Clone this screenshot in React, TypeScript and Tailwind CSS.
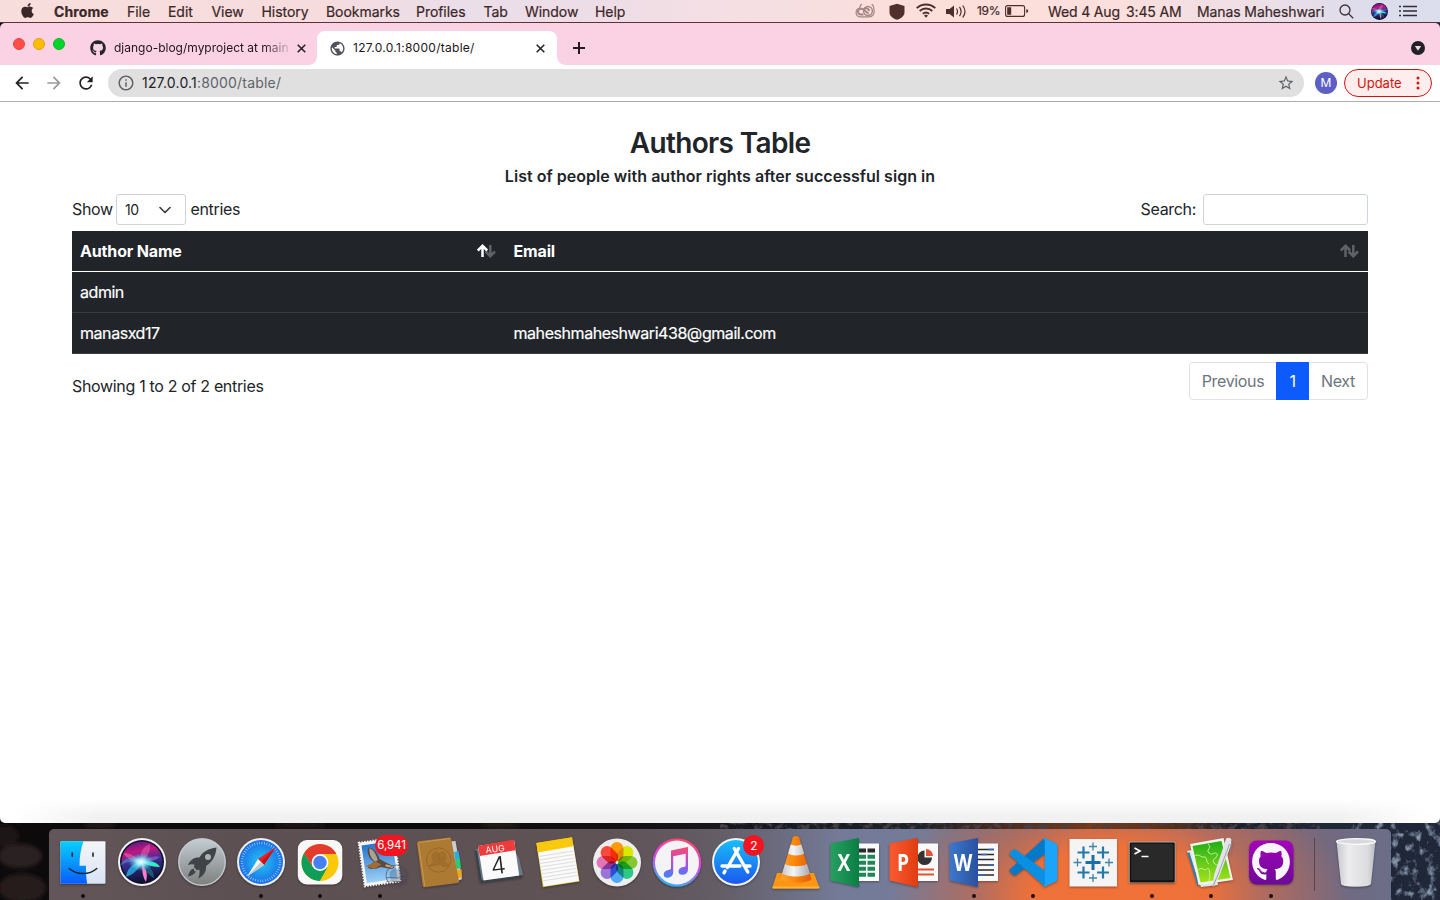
import React from "react";
import { FaApple, FaGithub } from "react-icons/fa";
import { MdArrowBack, MdArrowForward, MdInfoOutline, MdPublic, MdRefresh, MdStarBorder } from "react-icons/md";

const menus: [string, string][] = [
  ["File", "w-[41px]"],
  ["Edit", "w-[43.5px]"],
  ["View", "w-[50px]"],
  ["History", "w-[64.5px]"],
  ["Bookmarks", "w-[90px]"],
  ["Profiles", "w-[67.5px]"],
  ["Tab", "w-[41.5px]"],
  ["Window", "w-[70px]"],
  ["Help", "w-[40px]"],
];

function SiriOrb({ id }: { id: string }) {
  return (
    <>
      <defs>
        <linearGradient id={id + "a"} x1="0.3" y1="0" x2="0.5" y2="1">
          <stop offset="0" stopColor="#5a1c80" />
          <stop offset=".25" stopColor="#c3157f" />
          <stop offset=".5" stopColor="#3a2f92" />
          <stop offset="1" stopColor="#0b0f2e" />
        </linearGradient>
        <radialGradient id={id + "b"}>
          <stop offset="0" stopColor="#fff" />
          <stop offset=".35" stopColor="#a8f4ff" stopOpacity=".9" />
          <stop offset="1" stopColor="#35c6f0" stopOpacity="0" />
        </radialGradient>
        <clipPath id={id + "c"}><circle cx="28" cy="28" r="21.5" /></clipPath>
      </defs>
      <circle cx="28" cy="28" r="22" fill="#12112c" />
      <g clipPath={`url(#${id}c)`}>
        <circle cx="28" cy="28" r="20.5" fill={`url(#${id}a)`} />
        <path d="M28 28C20 22 10 22 6 32c8-6 14-4 22-4z" fill="#3aa7ee" opacity=".5" />
        <path d="M28 28C18 29 13 35 12 43c8-3 13-8 16-15z" fill="#25b5e5" opacity=".8" />
        <path d="M28 28c0 6 0 14 4 20 2-8 0-15-4-20z" fill="#ff7fc8" />
        <path d="M28 28c8-2 15 0 18 5-6 0-12-1-18-5z" fill="#2df0c0" />
        <path d="M28 28c6 2 12 8 12 16-7-4-10-9-12-16z" fill="#1b6f8a" opacity=".7" />
        <path d="M28 28c6-5 14-7 18-5-5 4-11 5-18 5z" fill="#a979e8" opacity=".5" />
        <path d="M28 28c-3-8 0-15 8-18 1 8-4 14-8 18z" fill="#ef7cc5" opacity=".4" />
        <path d="M28 28c-6-5-11-9-19-9 4 6 10 9 19 9z" fill="#f07ab0" opacity=".5" />
        <ellipse cx="27" cy="28" rx="13" ry="9" fill={`url(#${id}b)`} />
      </g>
    </>
  );
}

function Finder() {
  return (
    <>
      <defs>
        <linearGradient id="fa" x1="0" y1="0" x2="0" y2="1"><stop stopColor="#08d0fd" /><stop offset="1" stopColor="#0a5cfb" /></linearGradient>
        <linearGradient id="fb" x1="0" y1="0" x2="0" y2="1"><stop stopColor="#f4f5f8" /><stop offset="1" stopColor="#d8e4f4" /></linearGradient>
      </defs>
      <rect x="5.500" y="7.300" width="45" height="42.500" rx="1" fill="url(#fb)" />
      <path d="M5.500 8.300q0-1 1-1H28.500c-2.500 7-4 15-4 24.500h6.500c-.2 6 .2 12 1.200 18H6.500q-1 0-1-1z" fill="url(#fa)" />
      <path d="M17.300 18.500v4.300M38 18.500v4.300" stroke="#142636" strokeWidth="1.600" />
      <path d="M14.300 34.500c7.500 6.800 20 6.800 27.500 0" fill="none" stroke="#142636" strokeWidth="1.500" strokeLinecap="round" />
    </>
  );
}

function Siri() {
  return (
    <>
      <circle cx="28" cy="28" r="24" fill="#f2f2f4" />
      <SiriOrb id="sd" />
    </>
  );
}

function Launchpad() {
  return (
    <>
      <defs><linearGradient id="la" x1="0" y1="0" x2="0" y2="1"><stop stopColor="#c1cdd2" /><stop offset="1" stopColor="#7f8080" /></linearGradient></defs>
      <circle cx="28" cy="28" r="24" fill="#c3c9cc" />
      <circle cx="28" cy="28" r="22.600" fill="url(#la)" />
      <path d="M42.500 13.500c-8 1-13.500 4-17.200 10-4.500-.6-9 2-11.300 7.500 3-1 5-1 6.600-.3l-.8 2.300 3.200 3.200 2.300-.8c.6 2.500.3 5-1 9.100 5.500-2.600 8.200-7 7.800-12.500 6-4 9.600-9.500 10.400-18.500z" fill="#414446" />
      <circle cx="34" cy="23" r="3" fill="#a9b3b7" />
      <path d="M19.500 34.500c-3 .8-4.500 4-5.500 8 4-1 7-2.500 8.200-5.300l-1.500.2z" fill="#414446" />
    </>
  );
}

function Safari() {
  return (
    <>
      <defs><radialGradient id="sa"><stop stopColor="#23c9f6" /><stop offset="1" stopColor="#1a6ce8" /></radialGradient></defs>
      <circle cx="28" cy="28" r="24" fill="#eef0f2" />
      <circle cx="28" cy="28" r="22" fill="url(#sa)" />
      <circle cx="28" cy="28" r="19" fill="none" stroke="#d8f0ff" strokeWidth="2.600" strokeDasharray=".7 1.790" opacity=".75" />
      <path d="M42.500 13.500 31 31l-6-6z" fill="#f01d23" />
      <path d="M42.500 13.500 31 31l-3-3z" fill="#c91218" />
      <path d="M14 42.500 25 25l6 6z" fill="#f6f6f6" />
      <path d="M14 42.500 31 31l-3-3z" fill="#c3c8cc" />
    </>
  );
}

function Chrome() {
  return (
    <>
      <rect x="5.800" y="6" width="44.500" height="44.500" rx="9" fill="#f8f8f8" />
      <circle cx="28" cy="28.500" r="18.500" fill="#fcc90a" />
      <path d="M12 19.250A18.500 18.500 0 0 1 44.020 19.250L44 20.100H28L20.700 32.700z" fill="#e33b2e" />
      <path d="M12 19.250A18.500 18.500 0 0 0 28 47l8-14.200-6 4-9.300-4z" fill="#0f9d58" />
      <path d="M44 20.100H28v8.400l8 4.200L28 47A18.500 18.500 0 0 0 44 20.100z" fill="#fcc90a" />
      <circle cx="28" cy="28.500" r="8.400" fill="#f8f8f8" />
      <circle cx="28" cy="28.500" r="6.700" fill="#4680f5" />
    </>
  );
}

function Mail() {
  return (
    <>
      <defs><linearGradient id="ma" x1="0" y1="0" x2="0" y2="1"><stop stopColor="#2574cf" /><stop offset="1" stopColor="#9cd0f4" /></linearGradient></defs>
      <g transform="rotate(-8 28 28)">
        <rect x="9.500" y="6" width="36" height="44" fill="#f4f4f2" stroke="#f4f4f2" strokeWidth="2" strokeDasharray="1.500 1.300" />
        <rect x="12" y="9" width="31" height="38" fill="url(#ma)" />
        <path d="M18 12c6 1 9 7 10 13l4 3 9 6c1 2-2 3-4 2l-9-3c-4 1-9 2-13-1l7-5c-4-3-6-9-4-15z" fill="#5b4a3d" />
        <path d="M19.500 13c4 2 6 8 6.500 13l-3 1c-3-3-5-8-3.500-14z" fill="#a8a298" />
        <path d="m13 30 11-3 5 4-8 3z" fill="#a06d38" />
        <path d="M33 32l7 3" stroke="#c9a67c" strokeWidth="2" />
      </g>
      <circle cx="44.500" cy="41.500" r="10.500" fill="none" stroke="#4c4960" strokeWidth="1" opacity=".65" />
      <circle cx="44.500" cy="41.500" r="7" fill="#3f5878" opacity=".35" />
      <path d="M34 48c6-3 11 2 20-2M34 44c6-2 11 2 20-2" stroke="#4c4960" fill="none" opacity=".6" />
    </>
  );
}

function Contacts() {
  return (
    <>
      <path d="M39 7.500 44.500 7 51 45 45 48z" fill="#c9ced2" />
      <path d="M43 18l4.500-.7 1.500 8-4.500 1z" fill="#28aede" />
      <path d="m44 26 5-.8 1 9-4.500.8z" fill="#28cc72" />
      <path d="m45.500 36 5-.8.500 8-4.500 1z" fill="#f3a51d" />
      <path d="M8 7.200 38.500 3.500q1.500-.2 1.700 1.300L48 47.300q.2 1.500-1.300 1.800L14 53.300q-2 .1-2.300-1.500L6 9.200q-.2-1.700 2-2z" fill="#ad7a34" />
      <path d="m7.500 9.500 6.200 42.500M8 8.500l31-4" stroke="#c79852" strokeWidth="1" fill="none" />
      <g fill="#9a6928" stroke="#86581f" opacity=".6">
        <circle cx="27.700" cy="26" r="12.200" strokeWidth=".9" fill="none" />
        <path d="M17.500 32.500c1-3 5-2.500 5.500-5-3-3-2-8.500 1-9.300 3-.6 4.500 2.300 4 6-.2 3 0 4 1 6zM38 32c-1-3-4-2.500-5-4.500 3-4 2-9-1.500-9.500-4 0-5 5-2.300 9.500 0 2 1 4 3 5z" strokeWidth=".6" />
      </g>
    </>
  );
}

function Calendar() {
  return (
    <>
      <path d="M4.500 15 10 46l42-5-4-17-8-12z" fill="#6b7986" />
      <path d="m5 16.500 5 31.500L51 42.500" fill="none" stroke="#39424b" strokeWidth="2" />
      <path d="m7 12 36.200-5.500 5 35L12.500 46.500z" fill="#fafafa" />
      <path d="m7 12 35.700-6.500L44.700 16.200 8.800 22z" fill="#ee3b3c" />
      <g transform="rotate(-7 26 26)" fontFamily="Inter, sans-serif" textAnchor="middle">
        <text x="25.500" y="18" fontSize="8.800" fill="#fff">AUG</text>
        <text x="26.500" y="40" fontSize="24" fontWeight="300" fill="#222">4</text>
      </g>
    </>
  );
}

function Notes() {
  return (
    <>
      <path d="M6.300 9 42 3.300 49.500 47.500 12.800 53.300z" fill="#d5b91c" />
      <path d="M7.500 15 43 9.500l6 37.500-35.500 5.500z" fill="#fafafa" />
      <path d="m6.300 9 35.700-5.700 1.200 9L7.800 18.500z" fill="#f9c90e" />
      <path d="m8.500 22.500 35-5.500M9 26l35-5.500M9.600 29.500l35-5.500m-34.500 9 35-5.500m-34.500 9 35-5.500m-34.500 9 35-5.500m-34.500 9 35-5.500m-34.500 9 35-5.500" stroke="#c9cacc" strokeWidth=".6" />
    </>
  );
}

const petals: [number, string][] = [
  [0, "#ff9a08"], [45, "#dbe800"], [90, "#84c832"], [135, "#2cc987"],
  [180, "#4fa9f7"], [225, "#9a74d8"], [270, "#e274b8"], [315, "#fb4a3a"],
];

function Photos() {
  return (
    <>
      <circle cx="28" cy="28.500" r="24" fill="#eeeeef" />
      <g transform="translate(28 28.500)" className="isolate">
        {petals.map(([a, c]) => (
          <rect key={a} x="-6.500" y="-20.500" width="13" height="19.500" rx="6.500" fill={c} transform={`rotate(${a})`} className="mix-blend-multiply" />
        ))}
        <circle r="1.200" fill="#fff" />
      </g>
    </>
  );
}

function ITunes() {
  return (
    <>
      <defs><linearGradient id="ia" x1=".7" y1="0" x2=".4" y2="1"><stop stopColor="#fc4a5e" /><stop offset=".45" stopColor="#df42e4" /><stop offset="1" stopColor="#2fb5f5" /></linearGradient>
        <linearGradient id="ib" x1="0" y1="0" x2="0" y2="1"><stop stopColor="#fb4b66" /><stop offset=".55" stopColor="#b24be8" /><stop offset="1" stopColor="#3a87f5" /></linearGradient></defs>
      <circle cx="28" cy="28.500" r="24.300" fill="url(#ia)" />
      <circle cx="28" cy="28.500" r="22" fill="#f4f3f6" />
      <path d="M22 16.500 39 13v22.500c0 3-2 5-5 5.300-2.800.3-4.500-1-4.500-3.300 0-2.500 2-3.800 4.800-4.400 1.500-.3 2.400-.7 2.400-2.200V19.700l-12.500 2.600v16c0 3-2 5-5 5.400-2.700.3-4.500-1-4.500-3.300 0-2.500 2-3.900 4.800-4.500 1.600-.3 2.500-.7 2.500-2.200z" fill="url(#ib)" />
    </>
  );
}

function AppStore() {
  return (
    <>
      <defs><linearGradient id="aa" x1="0" y1="0" x2="0" y2="1"><stop stopColor="#18bdf9" /><stop offset="1" stopColor="#1b58ee" /></linearGradient></defs>
      <circle cx="28" cy="28" r="24" fill="#f0f2f5" />
      <circle cx="28" cy="28" r="22" fill="url(#aa)" />
      <path d="m26.300 14.500 13.500 23.500M30.500 14.500 19.500 33.500M14 32h18M37.500 32h4.500M17 37l-1 1.800" stroke="#fff" strokeWidth="3.400" strokeLinecap="round" />
    </>
  );
}

function Vlc() {
  return (
    <>
      <defs><linearGradient id="va" x1="0" y1="0" x2="1" y2="0"><stop stopColor="#ffa22f" /><stop offset=".4" stopColor="#ff8b10" /><stop offset="1" stopColor="#df5a03" /></linearGradient>
        <linearGradient id="vb" x1="0" y1="0" x2="1" y2="0"><stop stopColor="#c8cbce" /><stop offset=".4" stopColor="#f4f5f6" /><stop offset="1" stopColor="#a5a9ad" /></linearGradient></defs>
      <path d="M9 39h37l5 13.500q.5 2-1.500 2H6.500q-2.500 0-1.800-2z" fill="#fb9614" />
      <path d="M4.500 52.500h47v2h-47z" fill="#fbb43a" />
      <path d="M25 3q3-2 6 0l12.500 42c-4 5-27 5-31 0z" fill="url(#va)" />
      <path d="m22.700 10.500-2.600 9c3 2.500 13 2.500 16 0l-2.700-9c-2.500 1.500-8 1.500-10.700 0zM17 30l-2.800 9.500c5 4 23 4 27.800 0L39 30c-4 3-18 3-22 0z" fill="url(#vb)" />
    </>
  );
}

function Office({ letter, light, dark, children }: { letter: string; light: string; dark: string; children: React.ReactNode }) {
  const id = "of" + letter;
  return (
    <>
      <defs><linearGradient id={id}><stop stopColor={light} /><stop offset="1" stopColor={dark} /></linearGradient></defs>
      <path d="M30 9.500h22v37.500H30z" fill="#fafafa" />
      {children}
      <path d="M3.500 9.500 32 4v49L3.500 46.500z" fill={`url(#${id})`} />
      <text x="17" y="37" textAnchor="middle" fontSize="24" fontWeight="700" fill="#fff" fontFamily="'Open Sans', sans-serif" transform="translate(17 0) scale(.8 1) translate(-17 0)">{letter}</text>
    </>
  );
}

function Excel() {
  return (
    <Office letter="X" light="#28a060" dark="#0a7d44">
      <path d="M32 14.500h7v4h-7zM40.500 14.500h7.500v4h-7.500z" fill="#292929" />
      <path d="M32 20.700h7v4h-7zm8.500 0H48v4h-7.500zM32 26.700h7v4h-7zm8.500 0H48v4h-7.500zM32 32.700h7v4h-7zm8.500 0H48v4h-7.500zM32 38.700h7v4h-7zm8.500 0H48v4h-7.500z" fill="#208656" />
    </Office>
  );
}

function PowerPoint() {
  return (
    <Office letter="P" light="#fb5a30" dark="#e03c12">
      <path d="M38.500 16.500v7H46a7.300 7.300 0 1 1-7.500-7z" fill="#333" />
      <path d="M40 15a7 7 0 0 1 7 7h-7z" fill="#e2523b" />
      <path d="M32 35.500h16M32 40.500h16" stroke="#e4512c" strokeWidth="2" />
    </Office>
  );
}

function Word() {
  return (
    <Office letter="W" light="#3c78cc" dark="#2a50a0">
      <path d="M32 15.500h16M32 20.500h16M32 25.500h16M32 31h16M32 36h16M32 41h16" stroke="#282828" strokeWidth="1.500" />
      <path d="M42 15.500h6M35 20.500h6M42 31h6M32 41h7" stroke="#3968b8" strokeWidth="1.500" />
    </Office>
  );
}

function VsCode() {
  return (
    <>
      <path d="M39.500 4 41 19 9.500 41.700l-5-4.200.3-2z" fill="#0479c8" />
      <path d="M39.500 52.500 41 37.500 9.500 14.800l-5 4.200.3 2z" fill="#0a90e2" />
      <path d="M38 4.500q1-.8 2.300-.3L51 9.400q1.500.8 1.500 2.300v33.500q0 1.500-1.500 2.300l-10.700 5q-1.500.5-2.500-.5 1.500-.5 2-2.300v-43q-.5-2-1.800-2.200z" fill="#1ba4fb" />
    </>
  );
}

const plus: [number, number, number, string, number][] = [
  [28, 28.500, 7.500, "#1b6fa5", 3], [18.500, 18.500, 6, "#2478ab", 2.200], [38, 18.500, 6, "#2478ab", 2.200], [18.500, 38.500, 6, "#2478ab", 2.200],
  [38, 38.500, 6, "#2478ab", 2.200], [28, 12.500, 4, "#3f83a8", 1.300], [28, 44, 4, "#3f83a8", 1.300], [12.500, 28.500, 4, "#3f83a8", 1.300], [44, 28.500, 4, "#3f83a8", 1.300],
];

function Tableau() {
  return (
    <>
      <rect x="4.500" y="5" width="47.500" height="47.500" fill="#f4f4f4" />
      {plus.map(([x, y, r, c, w]) => (
        <path key={`${x}-${y}`} d={`M${x - r} ${y}h${2 * r}M${x} ${y - r}v${2 * r}`} stroke={c} strokeWidth={w} />
      ))}
    </>
  );
}

function Terminal() {
  return (
    <>
      <rect x="4.700" y="7.500" width="46.800" height="41.500" rx="1.500" fill="#a9aeae" />
      <rect x="5.700" y="8.500" width="45" height="40" rx="1" fill="#111" />
      <rect x="7.200" y="9.700" width="42" height="36.500" fill="#292929" />
      <path d="m10.500 14 5.500 3-5.500 3" fill="none" stroke="#fff" strokeWidth="1.700" />
      <path d="M17.500 22.500h7" stroke="#fff" strokeWidth="1.500" />
    </>
  );
}

function ScriptEditor() {
  return (
    <>
      <defs><linearGradient id="ga" x1="0" y1="0" x2="0" y2="1"><stop stopColor="#1fae19" /><stop offset="1" stopColor="#a5e318" /></linearGradient></defs>
      <path d="M4 17 28 12 35 51 18 53z" fill="#dfe8ec" />
      <path d="m5.500 18.500 10 33" stroke="#2c7eb2" strokeWidth="2" />
      <path d="M7 10 40.500 4 50 46 15.500 51z" fill="#f2f3ec" />
      <path d="M9.500 12 38.500 7 47.500 44 17.500 48.500z" fill="url(#ga)" />
      <path d="M25 10c5 4-3 6 1 9s6-2 8 1-6 5-3 9 7 0 9 4M11 22c5-3 7 2 10 1s2 6 5 7M15 36c4-4 7 2 9-1s4 5 2 12" fill="none" stroke="#c7f3a0" strokeWidth="1" />
      <path d="M43 4.500q4-2 5.500 1l-1 7L36 43l-5 9.500-1.500-.5L31 41 41 11z" fill="#e2e4e7" />
      <path d="M46.500 10 34.500 42l-4.500 10M49 7l-2 13" fill="none" stroke="#8b9099" strokeWidth=".8" />
    </>
  );
}

function GithubDesktop() {
  return (
    <>
      <defs><linearGradient id="gd" x1="0" y1="0" x2="0" y2="1"><stop stopColor="#a305b8" /><stop offset="1" stopColor="#6c0a98" /></linearGradient></defs>
      <rect x="6" y="6.500" width="44.500" height="44" rx="8" fill="url(#gd)" />
      <FaGithub x="8.500" y="8.500" size={39} color="#f8f6fa" />
    </>
  );
}

function Trash() {
  return (
    <>
      <defs><linearGradient id="ta"><stop stopColor="#c6c7cb" /><stop offset=".3" stopColor="#ececee" /><stop offset=".8" stopColor="#dcdcdf" /><stop offset="1" stopColor="#b7b8bf" /></linearGradient></defs>
      <path d="m8.500 7 4.500 43q.3 2.500 15 2.700 14.500-.2 15-2.700L47.500 7z" fill="url(#ta)" />
      <ellipse cx="28" cy="7.500" rx="19.500" ry="2.800" fill="#d8d9dc" stroke="#fafafa" strokeWidth="1.300" />
    </>
  );
}

const dock: { name: string; art: () => React.ReactElement; run?: boolean; badge?: string }[] = [
  { name: "Finder", art: Finder, run: true },
  { name: "Siri", art: Siri },
  { name: "Launchpad", art: Launchpad },
  { name: "Safari", art: Safari, run: true },
  { name: "Chrome", art: Chrome, run: true },
  { name: "Mail", art: Mail, run: true, badge: "6,941" },
  { name: "Contacts", art: Contacts },
  { name: "Calendar", art: Calendar },
  { name: "Notes", art: Notes },
  { name: "Photos", art: Photos },
  { name: "iTunes", art: ITunes },
  { name: "App Store", art: AppStore, badge: "2" },
  { name: "VLC", art: Vlc },
  { name: "Excel", art: Excel },
  { name: "PowerPoint", art: PowerPoint },
  { name: "Word", art: Word, run: true },
  { name: "VS Code", art: VsCode, run: true },
  { name: "Tableau", art: Tableau },
  { name: "Terminal", art: Terminal, run: true },
  { name: "Script Editor", art: ScriptEditor, run: true },
  { name: "GitHub Desktop", art: GithubDesktop, run: true },
];

function DockIcon({ children }: { children: React.ReactNode }) {
  return <svg width="56" height="56" viewBox="0 0 56 56" className="shrink-0 overflow-visible drop-shadow-[0_1px_1px_rgba(0,0,0,0.35)]">{children}</svg>;
}

function MenuBar() {
  return (
    <header className="flex h-[23px] items-center border-b border-[#5a3436] bg-[linear-gradient(90deg,#f7dedc_0%,#f6dcdd_22%,#eadee9_32%,#eedde6_42%,#f5dfe3_52%,#fddfd9_66%,#fadfdd_78%,#ecdfe8_88%,#dbdcec_96%,#dcdeee_100%)] text-[14px] tracking-[-0.05px] text-[#3b2728] [-webkit-text-stroke:0.2px]">
      <div className="flex w-[54px] pl-[19px]"><FaApple size={17} className="-mt-px" /></div>
      <div className="w-[73px] font-bold tracking-[0.1px]">Chrome</div>
      {menus.map(([m, w]) => <div key={m} className={`${w} whitespace-nowrap`}>{m}</div>)}
      <div className="ml-auto flex h-full items-center whitespace-nowrap">
        <svg width="20" height="14" viewBox="0 0 20 14" className="mr-[14px]" fill="none" stroke="#a58783">
          <path d="M5 12.900A4.300 4.300 0 0 1 4.600 4.400 6.500 6.500 0 0 1 18.900 5.500C20 10 17.500 12.900 14 12.900z" strokeWidth="1.200" />
          <circle cx="13" cy="7" r="4.400" strokeWidth="1.500" />
          <path d="M13.800 9.200c-3 0-4-5-7.800-4.500a2.900 2.900 0 0 0-.3 5.800h2.800M9 5c2.200-1.800 4.500-.5 5.300 2" strokeWidth="2" />
        </svg>
        <svg width="16" height="17" viewBox="0 0 16 17" className="mr-[11px]"><path d="M8 .7 15.500 3v6c0 4-3 6.300-7.500 7.700C3.500 15.300.500 13 .500 9V3z" fill="#51302c" /></svg>
        <svg width="20" height="15" viewBox="0 0 20 15" className="mr-[10px] -mt-px" fill="none" stroke="#4b2f2d" strokeWidth="1.800">
          <path d="M.7 5.200a13.500 13.500 0 0 1 18.600 0M3.700 8a9.200 9.200 0 0 1 12.600 0M6.800 10.800a5 5 0 0 1 6.400 0" />
          <path d="m10 14.800 2-2.200a3 3 0 0 0-4 0z" fill="#4b2f2d" stroke="none" />
        </svg>
        <svg width="21" height="15" viewBox="0 0 21 15" className="mr-[10px]" fill="none" stroke="#4b2f2d" strokeWidth="1.200">
          <path d="M0 5h3.500L8 1.500v12L3.500 10H0z" fill="#4b2f2d" stroke="none" />
          <path d="M10.500 4.500q2 3 0 6M13.500 2.800q3.200 4.700 0 9.400M16.700 1.500q4.600 6 0 12" />
        </svg>
        <span className="mr-[4px] w-[24px] text-[12px] tracking-[-0.3px]">19%</span>
        <svg width="24" height="12" viewBox="0 0 24 12" className="mr-[19px]"><rect x=".6" y=".6" width="19" height="10.800" rx="2" fill="none" stroke="#4b2f2d" strokeWidth="1.100" /><path d="M2.200 2.200h4v7.600h-4zM21.300 4q2 .3 2 2t-2 2z" fill="#4b2f2d" /></svg>
        <span className="w-[78px] tracking-[-0.15px]">Wed 4 Aug</span>
        <span className="w-[71px] tracking-[-0.15px]">3:45 AM</span>
        <span className="w-[142px] tracking-[-0.1px]">Manas Maheshwari</span>
        <svg width="15" height="15" viewBox="0 0 15 15" className="mr-[17px]" fill="none" stroke="#3b3038" strokeWidth="1.300"><circle cx="6" cy="6" r="5" /><path d="m9.700 9.700 4.500 4.500" /></svg>
        <svg width="17" height="17" viewBox="6 6 44 44" className="mr-[11px]"><SiriOrb id="sm" /></svg>
        <svg width="19" height="12" viewBox="0 0 19 12" className="mr-[22px]" stroke="#302b36" strokeWidth="1.600"><path d="M0 1.500h2M4 1.500h14M0 6h2M4 6h14M0 10.500h2M4 10.500h14" /></svg>
      </div>
    </header>
  );
}

function Close() {
  return <svg width="9" height="9" viewBox="0 0 9 9" className="shrink-0" stroke="#2d2228" strokeWidth="1.600"><path d="m.7.7 7.600 7.600M8.300.7.7 8.300" /></svg>;
}

function TabStrip() {
  return (
    <div className="flex h-[42px] items-end bg-[#fbd1e4] text-[12px] text-[#1d1519]">
      <div className="flex h-[42px] w-[83px] items-center gap-[8px] pl-[13px]">
        <i className="size-[12px] rounded-full border-[0.500px] border-[#e2463f] bg-[#fe4e47]" />
        <i className="size-[12px] rounded-full border-[0.500px] border-[#e0a010] bg-[#ffbc05]" />
        <i className="size-[12px] rounded-full border-[0.500px] border-[#11b32a] bg-[#04d52c]" />
      </div>
      <div className="flex h-[34px] w-[234px] items-center pl-[7px]">
        <FaGithub size={16} color="#24242b" />
        <span className="ml-[8px] mr-[9px] w-[174px] overflow-hidden whitespace-nowrap bg-[linear-gradient(90deg,#1d1519_86%,#1d151930_100%)] bg-clip-text text-transparent">django-blog/myproject at main</span>
        <Close />
      </div>
      <div className="relative flex h-[34px] w-[240px] items-center rounded-t-[8px] bg-white pl-[12px] before:absolute before:-left-2 before:bottom-0 before:size-2 before:bg-[radial-gradient(circle_at_0_0,transparent_7.500px,#fff_8px)] after:absolute after:-right-2 after:bottom-0 after:size-2 after:bg-[radial-gradient(circle_at_100%_0,transparent_7.500px,#fff_8px)]">
        <MdPublic size={17} color="#50545a" />
        <span className="ml-[7px] w-[183px] tracking-[0.28px]">127.0.0.1:8000/table/</span>
        <Close />
      </div>
      <div className="flex h-[34px] w-[44px] items-center justify-center"><svg width="12" height="12" viewBox="0 0 12 12" stroke="#241a20" strokeWidth="2"><path d="M6 0v12M0 6h12" /></svg></div>
      <div className="ml-auto mr-[15px] flex h-[34px] items-center"><svg width="14" height="14" viewBox="0 0 14 14"><circle cx="7" cy="7" r="7" fill="#202126" /><path d="M3.800 5h6.400L7 9.700z" fill="#fbd1e4" /></svg></div>
    </div>
  );
}

function Toolbar() {
  return (
    <div className="flex h-[37px] items-center border-b border-[#acacac] bg-white text-[14px]">
      <div className="flex w-[108px] items-center gap-[12px] pl-[12px] text-[#202124]">
        <MdArrowBack size={20} /><MdArrowForward size={20} color="#9b9b9b" /><MdRefresh size={20} />
      </div>
      <div className="flex h-[28px] w-[1196px] items-center rounded-full bg-[#e0e0e0] pl-[9px] pr-[9px] text-[#5f6368]">
        <MdInfoOutline size={18} />
        <span className="-mt-px ml-[7px] tracking-[0.19px]"><span className="text-[#202124]">127.0.0.1</span>:8000/table/</span>
        <MdStarBorder size={18} className="ml-auto" />
      </div>
      <div className="ml-[11px] flex size-[22px] items-center justify-center rounded-full bg-[#5c5fc5] text-[12px] text-white">M</div>
      <div className="ml-[7px] flex h-[28px] w-[88px] items-center rounded-full border border-[#d3140c] bg-[#fdeeed] pl-[12px] text-[13px] text-[#d3140c]">
        <span className="w-[59px] pt-px">Update</span>
        <svg width="4" height="14" viewBox="0 0 4 14" fill="#d3140c"><circle cx="2" cy="2" r="1.500" /><circle cx="2" cy="7" r="1.500" /><circle cx="2" cy="12" r="1.500" /></svg>
      </div>
    </div>
  );
}

function SortArrows({ active }: { active?: boolean }) {
  return (
    <svg width="19" height="14" viewBox="0 0 19 14" fill="none" strokeWidth="2.500">
      <path d="M13.300 1v11M8.600 7.500l4.700 4.700L18 7.500" stroke="#606366" />
      <path d="M5.500 13V2M.8 6.500l4.700-4.700 4.700 4.700" stroke={active ? "#fff" : "#606366"} />
    </svg>
  );
}

function AuthorsPage() {
  return (
    <main className="relative flex-1 bg-white px-[72px] pt-[24px] text-[16px] leading-[24px] tracking-[-0.33px] text-[#212529]">
      <h1 className="text-center text-[28px] font-semibold leading-[34px] tracking-[-0.65px]">Authors Table</h1>
      <p className="mt-[4px] text-center font-semibold tracking-[0.03px]">List of people with author rights after successful sign in</p>
      <div className="mt-[6px] flex h-[31px] items-center">
        <span className="-mt-px w-[44px]">Show</span>
        <div className="flex h-[31px] w-[70px] items-center justify-between rounded-[3px] border border-[#ced4da] pl-[8px] pr-[14px] text-[14px]">
          10
          <svg width="12" height="8" viewBox="0 0 12 8" fill="none" stroke="#343a40" strokeWidth="1.600" strokeLinecap="round" strokeLinejoin="round"><path d="m1 1.500 5 5 5-5" /></svg>
        </div>
        <span className="-mt-px ml-[4.500px]">entries</span>
        <span className="-mt-px ml-auto">Search:</span>
        <div className="ml-[7px] h-[31px] w-[165px] rounded-[3px] border border-[#ced4da]" />
      </div>
      <div className="mt-[6px] bg-[#212529] text-white">
        <div className="flex h-[41px] items-center border-b border-white font-bold tracking-[-0.16px]">
          <div className="flex w-[433.500px] items-center justify-between pl-[8px] pr-[10px]">Author Name<SortArrows active /></div>
          <div className="flex flex-1 items-center justify-between pl-[8px] pr-[9px]">Email<SortArrows /></div>
        </div>
        <div className="flex h-[41px] items-center border-b border-[#373b3e] px-[8px] tracking-[-0.45px] [-webkit-text-stroke:0.2px]">admin</div>
        <div className="flex h-[41px] items-center border-b border-[#373b3e] tracking-[-0.44px] [-webkit-text-stroke:0.2px]">
          <div className="w-[433.500px] pl-[8px]">manasxd17</div>
          <div className="pl-[8px]">maheshmaheshwari438@gmail.com</div>
        </div>
      </div>
      <div className="mt-[8px] flex h-[38px] justify-between">
        <div className="pt-[12px]">Showing 1 to 2 of 2 entries</div>
        <div className="flex h-[38px] overflow-hidden rounded-[4px] text-[#6c757d]">
          <div className="flex w-[87px] items-center justify-center rounded-l-[4px] border border-r-0 border-[#dee2e6]">Previous</div>
          <div className="flex w-[33px] items-center justify-center bg-[#0d5bfd] text-white">1</div>
          <div className="flex w-[59px] items-center justify-center rounded-r-[4px] border border-l-0 border-[#dee2e6]">Next</div>
        </div>
      </div>
      <div className="absolute inset-x-[10px] bottom-0 h-[24px] bg-[linear-gradient(180deg,transparent,#f1f1f1_70%)] [mask-image:linear-gradient(90deg,transparent,#000_90px,#000_calc(100%-90px),transparent)]" />
    </main>
  );
}

export default function App() {
  return (
    <div className="relative flex h-[900px] w-[1440px] flex-col overflow-hidden bg-[linear-gradient(90deg,#0d0a0b_0%,#0d0a0b_30%,#151216_45%,#171a22_55%,#20222a_64%,#4b2b1d_70%,#7a3a14_76%,#5a2f1c_81%,#1a1f2a_86%,#202737_92%,#1f2738_100%)] font-[Inter,'Liberation_Sans',sans-serif]">
      <svg className="absolute bottom-0 left-0" width="1440" height="80">
        <defs>
          <filter id="soft"><feGaussianBlur stdDeviation="2" /></filter>
          <filter id="rock" x="0" y="0" width="1" height="1"><feTurbulence type="fractalNoise" baseFrequency=".11 .09" numOctaves="4" seed="8" /><feColorMatrix values="0 0 0 0 .25  0 0 0 0 .31  0 0 0 0 .42  4 0 0 0 -2.100" /></filter>
          <filter id="grit" x="0" y="0" width="1" height="1"><feTurbulence type="fractalNoise" baseFrequency=".15 .2" numOctaves="3" seed="5" /><feColorMatrix values="0 0 0 0 .06  0 0 0 0 .05  0 0 0 0 .06  4 0 0 0 -1.800" /></filter>
        </defs>
        <g filter="url(#soft)" fill="#2b2120">
          <ellipse cx="5" cy="16" rx="14" ry="11" fill="#1e1716" />
          <ellipse cx="20" cy="36" rx="22" ry="12" />
          <ellipse cx="22" cy="68" rx="24" ry="14" fill="#261d1d" />
          <ellipse cx="100" cy="5" rx="16" ry="5" fill="#1e1716" />
          <ellipse cx="300" cy="5" rx="26" ry="4" fill="#1e1716" />
          <ellipse cx="500" cy="5" rx="20" ry="4" fill="#221a19" />
        </g>
        <rect x="720" width="600" height="80" filter="url(#grit)" />
        <rect x="1340" width="100" height="80" filter="url(#rock)" />
      </svg>
      <MenuBar />
      <div className="relative flex h-[800px] flex-col overflow-hidden rounded-[5px]">
        <TabStrip />
        <Toolbar />
        <AuthorsPage />
      </div>
      <footer className="relative ml-[49px] mt-[6px] flex h-[71px] w-[1342px] rounded-t-[5px] bg-[radial-gradient(ellipse_230px_130px_at_1070px_66px,#f17238_0%,#ee713a_38%,#c06d58cc_62%,#706b8000_100%),linear-gradient(90deg,#63565a_0%,#5d5052_15%,#605356_42%,#635d66_50%,#747b98_59%,#737b98_65%,#6d6b80_72%,#7b6670_80%,#77667a_92%,#6b6e88_100%)] pl-[4px]">
        {dock.map(({ name, art: Art, run, badge }) => (
          <div key={name} className="relative flex w-[59.420px] shrink-0 flex-col items-center pt-[5px]">
            <DockIcon><Art /></DockIcon>
            {badge && (
              <span className={badge.length > 1 ? "absolute left-[25px] top-[6px] flex h-[21px] w-[33px] items-center justify-center rounded-full bg-[#f01520] text-[11.500px] tracking-[-0.1px] text-white" : "absolute left-[37px] top-[6px] flex size-[21px] items-center justify-center rounded-full bg-[#f01520] text-[12px] text-white"}>{badge}</span>
            )}
            {run && <i className="mt-[4px] size-[4px] rounded-full bg-[#160b10]" />}
          </div>
        ))}
        <div className="ml-[13px] mt-[9px] h-[53px] w-px bg-[#5c4350]" />
        <div className="ml-[13px] mt-[5px]"><DockIcon><Trash /></DockIcon></div>
      </footer>
    </div>
  );
}
